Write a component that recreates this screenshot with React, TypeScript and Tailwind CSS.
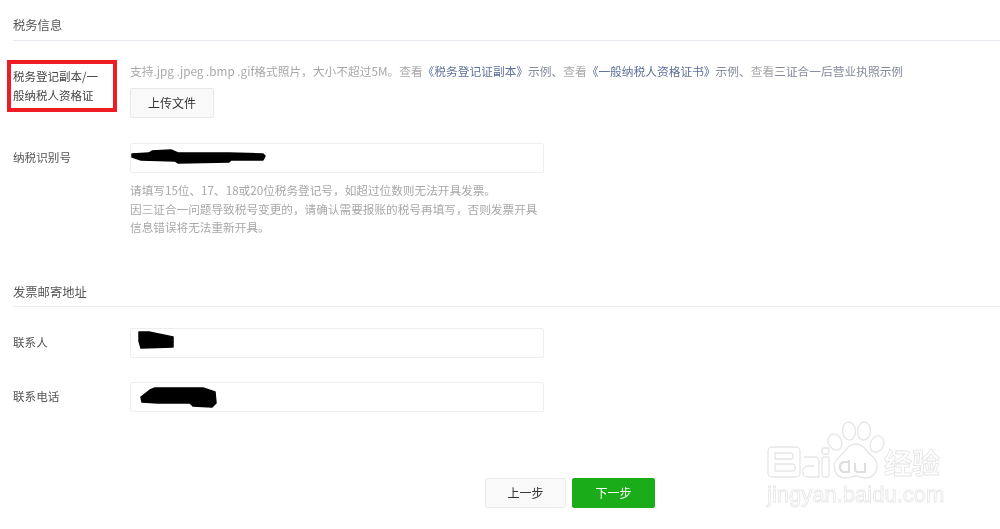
const font = { fontFamily: '"Noto Sans CJK SC", "Liberation Sans", sans-serif' };

function Scribble({ d, w, h }: { d: string; w: number; h: number }) {
  return (
    <svg width={w} height={h} viewBox={`0 0 ${w} ${h}`} className="absolute left-0 top-0">
      <path d={d} fill="#000" stroke="#000" strokeWidth="1.500" strokeLinejoin="round" />
    </svg>
  );
}

function Row({ label, top, children }: { label: string; top: string; children: React.ReactNode }) {
  return (
    <div className={`flex ${top}`}>
      <div className="w-[117px] shrink-0 pt-[5px] text-[11.600px] leading-[18px] text-[#555]">{label}</div>
      <div className="min-w-0">{children}</div>
    </div>
  );
}

function Field({ children }: { children: React.ReactNode }) {
  return <div className="relative h-[30px] w-[414px] rounded-[2px] border border-[#eceef2] bg-white">{children}</div>;
}

function Watermark() {
  return (
    <div className="pointer-events-none absolute left-[762px] top-[420px] h-[90px] w-[210px]">
      <svg width="125" height="62" viewBox="0 0 125 62" className="absolute left-0 top-0" fill="none" stroke="#e6e6e6" strokeWidth="1.3">
        <rect x="6" y="27" width="32" height="30" rx="4" />
        <path d="M13 33h15a2.500 2.500 0 0 1 0 6H13zM13 44h17a2.500 2.500 0 0 1 0 7H13z" />
        <path d="M42 37h11a4 4 0 0 1 4 4v16H46a5.500 5.500 0 0 1 0-11h6" />
        <rect x="60" y="37" width="7" height="20" rx="1.500" />
        <rect x="60" y="28" width="7" height="6" rx="1.500" />
        <ellipse cx="73" cy="22" rx="6.500" ry="8.500" transform="rotate(-25 73 22)" />
        <ellipse cx="87" cy="11" rx="6.500" ry="9" transform="rotate(-5 87 11)" />
        <ellipse cx="102" cy="11" rx="6.500" ry="9" transform="rotate(5 102 11)" />
        <ellipse cx="115" cy="24" rx="6.500" ry="8.500" transform="rotate(25 115 24)" />
        <path d="M94 24c8 0 10 8 17 13 7 6 5 21-8 21-4 0-6-2-9-2s-6 2-10 2c-13 0-15-15-7-21 7-5 8-13 17-13z" />
        <path d="M87 40v12h-6a5.500 5.500 0 0 1 0-10h6M93 43v6a3 3 0 0 0 3 3h7V43" strokeWidth="2" stroke="#dedede" />
      </svg>
      <div className="absolute left-[122px] top-[24px] text-[28px] font-bold leading-[36px] text-white [-webkit-text-stroke:0.8px_#e4e4e4]">经验</div>
      <div className="absolute left-[5px] top-[61px] text-[22px] leading-[28px] text-white [-webkit-text-stroke:0.8px_#e6e6e6]" style={{ fontFamily: '"Liberation Sans", sans-serif' }}>jingyan.baidu.com</div>
    </div>
  );
}

export default function App() {
  return (
    <div className="relative h-[529px] w-[1000px] overflow-hidden bg-white pl-[13px] blur-[0.4px]" style={font}>
      <h2 className="border-b border-[#e9edf2] pb-[6px] pt-[16px] text-[12.300px] font-normal leading-[18px] text-[#555]">税务信息</h2>

      <div className="relative mt-[20px] flex">
        <div className="w-[117px] shrink-0 pt-[6px] text-[11.500px] leading-[19px] text-[#444]">
          税务登记副本/一
          <br />
          般纳税人资格证
        </div>
        <div>
          <p className="whitespace-nowrap text-[11.730px] leading-[20px] text-[#a8a8a8]">
            支持.jpg .jpeg .bmp .gif格式照片，大小不超过5M。查看
            <span className="text-[#5f7199]">《税务登记证副本》</span>
            <span className="text-[#858a9a]">示例、</span>查看
            <span className="text-[#5f7199]">《一般纳税人资格证书》</span>
            <span className="text-[#858a9a]">示例、</span>查看
            <span className="text-[#858a9a]">三证合一后营业执照示例</span>
          </p>
          <button className="mt-[7px] block h-[30px] w-[84px] rounded-[2px] border border-[#e8e8e8] bg-[#f9f9f9] text-[12px] text-[#333]">上传文件</button>
        </div>
        <div className="absolute left-[-6px] top-[-1px] h-[52px] w-[110px] border-[4px] border-[#ee1c25]" />
      </div>

      <Row label="纳税识别号" top="mt-[25px]">
        <Field>
          <Scribble w={160} h={28} d="M1 10 L18 9 L21 7 L40 6 L47 9 L98 9 L132 10 L134 12 L132 16 L100 16 L98 18 L47 19 L44 17 L10 16 L1 13 Z" />
        </Field>
        <div className="mt-[8px] text-[11.650px] leading-[18.500px] text-[#a8a8a8]">
          <p>请填写15位、17、18或20位税务登记号，如超过位数则无法开具发票。</p>
          <p className="whitespace-nowrap">因三证合一问题导致税号变更的，请确认需要报账的税号再填写，否则发票开具</p>
          <p>信息错误将无法重新开具。</p>
        </div>
      </Row>

      <h2 className="mt-[46px] border-b border-[#e9edf2] pb-[5px] text-[12.300px] font-normal leading-[18px] text-[#555]">发票邮寄地址</h2>

      <Row label="联系人" top="mt-[21px]">
        <Field>
          <Scribble w={60} h={28} d="M8 3 L18 3 L42 8 L42 18 L10 19 L8 12 Z" />
        </Field>
      </Row>

      <Row label="联系电话" top="mt-[24px]">
        <Field>
          <Scribble w={100} h={28} d="M10 14 L19 7 L24 5 L72 5 L84 9 L85 20 L81 24 L62 23 L59 20 L27 20 L11 19 Z" />
        </Field>
      </Row>

      <div className="absolute left-[485px] top-[478px] flex gap-[6px]">
        <button className="h-[30px] w-[81px] rounded-[2px] border border-[#ececec] bg-[#f9f9f9] text-[12px] text-[#333]">上一步</button>
        <button className="h-[30px] w-[83px] rounded-[2px] border border-[#1aad19] bg-[#1aad19] text-[12px] text-white">下一步</button>
      </div>

      <Watermark />
    </div>
  );
}
